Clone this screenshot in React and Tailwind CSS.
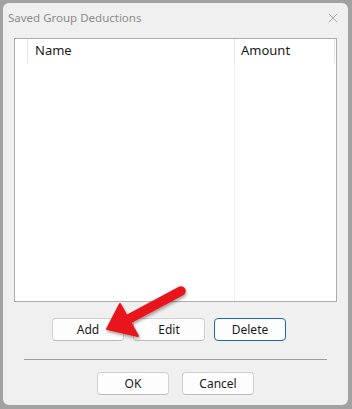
import { X } from 'lucide-react'

const font = { fontFamily: '"Segoe UI", "Noto Sans", "Open Sans", sans-serif' }

function Btn({ children, primary, className = '' }) {
  return (
    <button
      className={`h-[23px] w-[72px] rounded-[4px] bg-[#fdfdfd] text-[12px] text-[#1a1a1a] border ${
        primary ? 'border-[#1b68b8]' : 'border-[#d0d0d0] border-b-[#bdbdbd]'
      } ${className}`}
    >
      {children}
    </button>
  )
}

export default function App() {
  return (
    <div className="relative w-[352px] h-[409px] bg-[#a2a2a2] pt-[3px] pl-[3px] pr-[4px] pb-[4px]" style={font}>
      <div className="h-full bg-[#f0f0f0] rounded-[6px] flex flex-col">
        {/* title bar */}
        <div className="h-[29px] flex items-center justify-between pl-[5px] pr-[7px]">
          <span className="text-[11.5px] text-[#8c8c8c]">Saved Group Deductions</span>
          <X size={16} strokeWidth={1} className="text-[#8a8a8a]" />
        </div>

        {/* list view */}
        <div className="mx-[11px] mt-[6px] h-[264px] bg-white border border-[#acacac] flex flex-col">
          <div className="h-[24px] flex text-[13px] text-[#1a1a1a]">
            <div className="w-[13px] border-r border-[#e5e5e5]" />
            <div className="w-[207px] border-r border-[#e5e5e5] pl-[7px] flex items-center">Name</div>
            <div className="w-[100px] border-r border-[#e5e5e5] pl-[6px] flex items-center">Amount</div>
          </div>
          <div className="flex-1 flex">
            <div className="w-[220px] border-r border-[#f0f0f0]" />
          </div>
        </div>

        {/* action buttons */}
        <div className="mt-[16px] pl-[49px] flex gap-[9px]">
          <Btn>Add</Btn>
          <Btn>Edit</Btn>
          <Btn primary>Delete</Btn>
        </div>

        <div className="mt-[18px] mx-[21px] h-px bg-[#a0a0a0]" />

        <div className="mt-[12px] flex justify-center gap-[13px]">
          <Btn>OK</Btn>
          <Btn>Cancel</Btn>
        </div>
      </div>

      {/* red pointer arrow */}
      <svg className="absolute left-0 top-0 pointer-events-none" width="352" height="409" viewBox="0 0 352 409">
        <defs>
          <filter id="sh" x="-20%" y="-20%" width="140%" height="140%">
            <feDropShadow dx="1" dy="2" stdDeviation="1.5" floodColor="#000" floodOpacity="0.35" />
          </filter>
        </defs>
        <g filter="url(#sh)">
          <line x1="181" y1="291" x2="125" y2="321" stroke="#e8161b" strokeWidth="9.5" strokeLinecap="round" />
          <polygon points="107,329 120,304 138,336" fill="#e8161b" stroke="#e8161b" strokeWidth="2" strokeLinejoin="round" />
        </g>
      </svg>
    </div>
  )
}
